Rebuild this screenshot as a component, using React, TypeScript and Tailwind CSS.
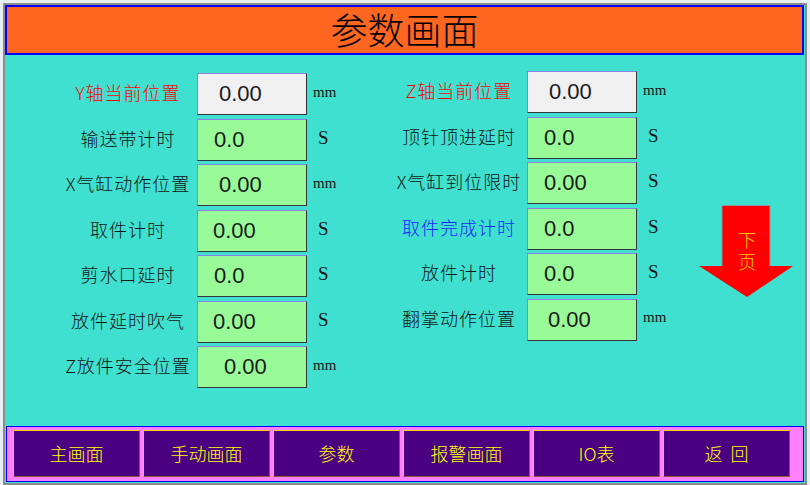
import React from "react";

type Field = {
  label: string;
  value: string;
  unit: string;
  color?: string;
  bg?: string;
  pad: string;
};

const CJK = "font-['Noto_Sans_CJK_SC','Noto_Sans',sans-serif]";

const leftFields: Field[] = [
  { label: "Y轴当前位置", value: "0.00", unit: "mm", color: "text-[#ff0000]", bg: "bg-[#f0f0f0]", pad: "pl-[21px]" },
  { label: "输送带计时", value: "0.0", unit: "S", pad: "pl-[16px]" },
  { label: "X气缸动作位置", value: "0.00", unit: "mm", pad: "pl-[21px]" },
  { label: "取件计时", value: "0.00", unit: "S", pad: "pl-[15px]" },
  { label: "剪水口延时", value: "0.0", unit: "S", pad: "pl-[16px]" },
  { label: "放件延时吹气", value: "0.00", unit: "S", pad: "pl-[15px]" },
  { label: "Z放件安全位置", value: "0.00", unit: "mm", pad: "pl-[26px]" },
];

const rightFields: Field[] = [
  { label: "Z轴当前位置", value: "0.00", unit: "mm", color: "text-[#ff0000]", bg: "bg-[#f0f0f0]", pad: "pl-[21px]" },
  { label: "顶针顶进延时", value: "0.0", unit: "S", pad: "pl-[16px]" },
  { label: "X气缸到位限时", value: "0.00", unit: "S", pad: "pl-[16px]" },
  { label: "取件完成计时", value: "0.0", unit: "S", color: "text-[#1f1fff]", pad: "pl-[16px]" },
  { label: "放件计时", value: "0.0", unit: "S", pad: "pl-[16px]" },
  { label: "翻掌动作位置", value: "0.00", unit: "mm", pad: "pl-[20px]" },
];

const navItems = ["主画面", "手动画面", "参数", "报警画面", "IO表", "返\u00a0\u00a0回"];

function FieldRow({ f, labelW }: { f: Field; labelW: string }) {
  return (
    <div className="flex h-[42px] items-center">
      <div className={`${labelW} -mt-[4px] text-center text-[18px] font-light leading-none tracking-[1px] ${CJK} ${f.color ?? "text-[#141414]"}`}>
        {f.label}
      </div>
      <div
        className={`flex h-[42px] w-[110px] items-center border border-t-[#8d7fe6] border-l-[#8d7fe6] border-b-[#34343c] border-r-[#34343c] ${f.bg ?? "bg-[#98fb98]"} ${f.pad}`}
      >
        <span className="font-['Liberation_Sans',sans-serif] text-[22px] leading-none text-[#1a1a1a]">{f.value}</span>
      </div>
      <div className="-mt-[5px] pl-[6px] font-['Liberation_Serif',serif] leading-none text-[#141414]">
        {f.unit === "mm" ? (
          <span className="text-[15px]">mm</span>
        ) : (
          <span className="pl-[5px] text-[19px]">S</span>
        )}
      </div>
    </div>
  );
}

function DownArrow() {
  return (
    <div className="relative h-[92px] w-[94px]">
      <svg width="94" height="92" viewBox="0 0 94 92">
        <polygon points="23,0 71,0 71,61 94,61 48,92 0,61 23,61" fill="#ff0000" />
        <polyline points="23,61 23,0.5 71,0.5 71,61" fill="none" stroke="#8a9a9a" strokeWidth="1" />
      </svg>
      <div className={`absolute left-[38px] top-[25px] flex w-[20px] flex-col items-center gap-[3px] text-[18px] font-light leading-[19px] text-[#ffcc00] ${CJK}`}>
        <span>下</span>
        <span>页</span>
      </div>
    </div>
  );
}

export default function App() {
  return (
    <div className="h-[485px] w-[810px] overflow-hidden bg-[#e9eff6] pl-[3px] pt-[3px]">
      <div className="flex h-[482px] w-[804px] flex-col border-2 border-[#8c8c8c] bg-[#40e0d0]">
        <div className="mr-[1px] flex h-[50px] items-center justify-center border-2 border-[#0000ff] bg-[#ff6620]">
          <span className={`-mt-[2px] text-[37px] font-light leading-none text-black ${CJK}`}>参数画面</span>
        </div>

        <div className="flex flex-1">
          <div className="ml-[54px] mt-[18px] flex w-[332px] flex-col gap-[3.5px]">
            {leftFields.map((f) => (
              <FieldRow key={f.label} f={f} labelW="w-[138px]" />
            ))}
          </div>
          <div className="mt-[16px] flex w-[302px] flex-col gap-[3.5px]">
            {rightFields.map((f) => (
              <FieldRow key={f.label} f={f} labelW="w-[136px]" />
            ))}
          </div>
          <div className="ml-[6px] mt-[150px]">
            <DownArrow />
          </div>
        </div>

        <div className="mx-[1px] mb-[1px] flex h-[56px] gap-[3px] border border-[#0000ff] bg-[#ff80ff] pb-[4px] pl-[6px] pt-[3px]">
          {navItems.map((n) => (
            <div
              key={n}
              className={`flex w-[127px] items-center justify-center border border-t-[#ffd700] border-l-[#ffd700] border-b-[#8b5a2b] border-r-[#8b5a2b] bg-[#4b0082] text-[18px] font-light text-[#ffff00] ${CJK}`}
            >
              {n}
            </div>
          ))}
        </div>
      </div>
    </div>
  );
}
